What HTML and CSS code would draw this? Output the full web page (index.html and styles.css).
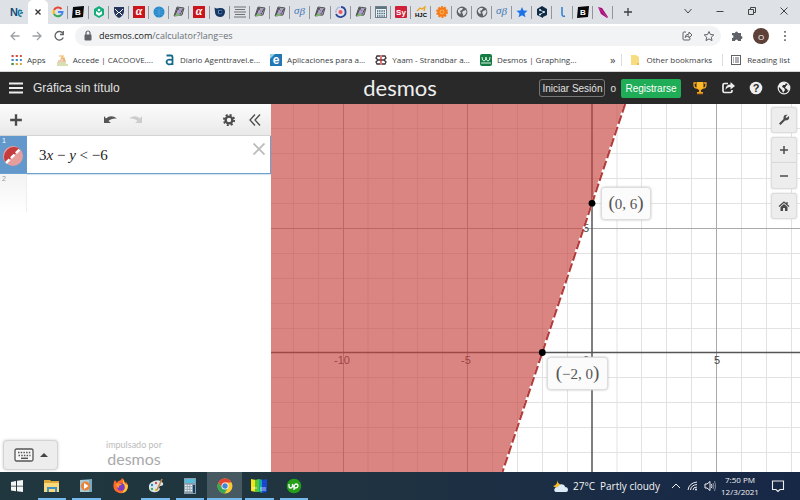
FILE: index.html
```html
<!DOCTYPE html>
<html lang="es">
<head>
<meta charset="utf-8">
<title>Gráfica sin título</title>
<link rel="stylesheet" href="styles.css">
</head>
<body>
<svg class="sprite" aria-hidden="true">
  <symbol id="geo" viewBox="0 0 12 12"><path d="M4 1 11 2 9 9 1 10Z" fill="#a7a2b8" stroke="#555"/><path d="m2 9 3-7 2 6 3-5" fill="none" stroke="#333" stroke-width=".8"/><path d="m5 3 3 4-3 1Z" fill="#b49ae0"/><path d="m1 10 4-3 2 3Z" fill="#7ab66b"/></symbol>
  <symbol id="globe" viewBox="0 0 12 12"><circle cx="6" cy="6" r="5.400" fill="#5f6368"/><path d="M2 4 4 2l3 0-1 2-2 1 1 2-1 1-2-2Zm5 1 3-1 .6 2-1.600 3-2 1 0-2-1-1Z" fill="#dee1e6"/></symbol>
</svg>

<header class="browser">
  <nav class="tabs" aria-label="Pestañas">
    <a class="pinned" href="#"><svg class="wide-icon" viewBox="0 0 14 12"><text x="0" y="10" class="nc" fill="#174a79">N</text><path d="M12 5Q8 3 8.500 7t3 3M10 7.500l3-1" fill="none" stroke="#187aa0" stroke-width="1.600"/></svg></a>
    <div class="tab-list">
      <a class="tab active" href="#"><svg viewBox="0 0 12 12"><path d="m3.500 3.500 5 5m0-5-5 5" stroke="#333" stroke-width="1.300"/></svg></a>
      <a class="tab" href="#"><svg viewBox="0 0 12 12" fill="none" stroke-width="2"><path d="M9.500 3A4.500 4.500 0 0 0 2 4" stroke="#ea4335"/><path d="M2 4a5 5 0 0 0 0 4" stroke="#fbbc05"/><path d="M2 8a4.500 4.500 0 0 0 7 1" stroke="#34a853"/><path d="M9 9.300Q10.500 8 10.500 6H6" stroke="#4285f4"/></svg></a>
      <a class="tab" href="#"><svg viewBox="0 0 12 12"><path d="m1 1 11-1-1 11-11 1Z" fill="#090909"/><text x="6" y="9" text-anchor="middle" class="bold-icon" fill="#fff">B</text></svg></a>
      <a class="tab" href="#"><svg viewBox="0 0 12 12"><path d="m6 0 5 3v6l-5 3-5-3V3Z" fill="#16ad79"/><path d="m3 5 3 2 3-2v3L6 10 3 8Z" fill="#fff"/><circle cx="6" cy="4" r="1.300" fill="#fff"/></svg></a>
      <a class="tab" href="#"><svg viewBox="0 0 12 12"><path d="M1 1h10v5q-1 4-5 6-4-2-5-6Z" fill="#26365f"/><path d="m2 3 4 4 4-4M3 9l3-3 3 3" stroke="#fff" fill="none"/></svg></a>
      <a class="tab" href="#"><svg viewBox="0 0 12 12"><rect width="12" height="12" fill="#c9151b"/><text x="6" y="9" text-anchor="middle" class="serif-icon" fill="#fff">α</text></svg></a>
      <a class="tab" href="#"><svg viewBox="0 0 12 12"><circle cx="6" cy="6" r="5.500" fill="#2786c9"/><path d="M6 1v10M1 6h10M2 3q4 3 8 0M2 9q4-3 8 0" stroke="#55a8df" fill="none" stroke-width=".7"/></svg></a>
      <a class="tab" href="#"><svg><use href="#geo"/></svg></a>
      <a class="tab" href="#"><svg viewBox="0 0 12 12"><rect width="12" height="12" fill="#c9151b"/><text x="6" y="9" text-anchor="middle" class="serif-icon" fill="#fff">α</text></svg></a>
      <a class="tab" href="#"><svg viewBox="0 0 12 12"><path d="M.5 1.500q2 1.500 5 .5 6-.5 5.500 4.500Q10 11 6 11 1 10.500 1 6Z" fill="#173662"/><circle cx="6" cy="6" r="2.200" fill="#5f9fd8"/><circle cx="6.300" cy="6" r="1.500" fill="#0b1d42"/></svg></a>
      <a class="tab" href="#"><svg viewBox="0 0 12 12"><path d="M0 1h12M1 3.500h10M0 6h12M1 8.500h10M0 11h12" stroke="#707070"/></svg></a>
      <a class="tab" href="#"><svg><use href="#geo"/></svg></a>
      <a class="tab" href="#"><svg><use href="#geo"/></svg></a>
      <a class="tab" href="#"><svg viewBox="0 0 12 12"><text x="0" y="8" class="sigma">σ<tspan dy="1">β</tspan></text></svg></a>
      <a class="tab" href="#"><svg><use href="#geo"/></svg></a>
      <a class="tab" href="#"><svg viewBox="0 0 12 12"><path d="M6 1a5 5 0 1 1-5 7" fill="none" stroke="#2b4599" stroke-width="1.800"/><path d="M5 1a5 5 0 0 0-4 6" fill="none" stroke="#b9badb" stroke-width="1.500"/><circle cx="5.500" cy="6" r="2" fill="#ee5265"/></svg></a>
      <a class="tab" href="#"><svg><use href="#geo"/></svg></a>
      <a class="tab" href="#"><svg viewBox="0 0 12 12"><rect x=".5" y=".5" width="11" height="11" fill="#eef2f4" stroke="#72808a"/><path d="M1 2h10" stroke="#5b7484" stroke-width="2"/><path d="M2 5h8M2 7.500h8M2 10h8" stroke="#345c78" stroke-width="1.400" stroke-dasharray="1.300 .9"/></svg></a>
      <a class="tab" href="#"><svg viewBox="0 0 12 12"><rect width="12" height="12" rx="1" fill="#cf2139"/><text x="6" y="9" text-anchor="middle" class="bold-icon" fill="#fff">Sy</text></svg></a>
      <a class="tab" href="#"><svg viewBox="0 0 12 12"><path d="m2 5 3-3 2 1 3-2-1 4" fill="none" stroke="#e9a51d" stroke-width="1.300"/><text x="6" y="11" text-anchor="middle" class="hjc">HJC</text></svg></a>
      <a class="tab" href="#"><svg viewBox="0 0 12 12"><circle cx="6" cy="6" r="4.800" fill="#f47b16"/><circle cx="6" cy="6" r="5.100" fill="none" stroke="#f47b16" stroke-width="1.600" stroke-dasharray="2 1.200"/><circle cx="6" cy="6" r="2" fill="none" stroke="#ffc17b" stroke-width=".8"/></svg></a>
      <a class="tab" href="#"><svg><use href="#globe"/></svg></a>
      <a class="tab" href="#"><svg><use href="#globe"/></svg></a>
      <a class="tab" href="#"><svg viewBox="0 0 12 12"><text x="0" y="8" class="sigma">σ<tspan dy="1">β</tspan></text></svg></a>
      <a class="tab" href="#"><svg viewBox="0 0 12 12"><path d="m6 1 1.500 3.500 4 .3-3 2.600 1 3.900L6 9.200l-3.500 2.100 1-3.900-3-2.600 4-.3Z" fill="#1a73e8"/></svg></a>
      <a class="tab" href="#"><svg viewBox="0 0 12 12"><path d="m6 0 5 3v6L7 11v1L1 9V3Z" fill="#0f2b46"/><path d="m4 4 4 2-4 2.500" fill="none" stroke="#d5e8f7" stroke-width=".8"/><circle cx="4" cy="4" r=".9" fill="#fff"/><circle cx="8" cy="6" r=".9" fill="#fff"/><circle cx="4" cy="8.500" r=".9" fill="#fff"/></svg></a>
      <a class="tab" href="#"><svg viewBox="0 0 12 12"><path d="M5 1v7q0 3 3 2" fill="none" stroke="#2b7ed2" stroke-width="1.500"/></svg></a>
      <a class="tab" href="#"><svg viewBox="0 0 12 12"><path d="m1 1 11-1-1 11-11 1Z" fill="#090909"/><text x="6" y="9" text-anchor="middle" class="bold-icon" fill="#fff">B</text></svg></a>
      <a class="tab" href="#"><svg viewBox="0 0 12 12"><path d="m1 1 4 1 6 9-1 1-6-4Z" fill="#a30c77"/><path d="m1 1 9 10" stroke="#e062b1" stroke-width=".6"/></svg></a>
    </div>
    <button class="new-tab" aria-label="Nueva pestaña"><svg viewBox="0 0 12 12"><path d="M6 2v8M2 6h8" stroke="#3c4043" stroke-width="1.300"/></svg></button>
    <div class="window-controls">
      <button aria-label="Buscar pestañas"><svg viewBox="0 0 12 12"><path d="m2.500 4 3.500 4 3.500-4"/></svg></button>
      <button aria-label="Minimizar"><svg viewBox="0 0 12 12"><path d="M2.500 6.500h7"/></svg></button>
      <button aria-label="Restaurar"><svg viewBox="0 0 12 12"><path d="M2.500 4.500h5v5h-5Zm2 0v-2h5v5h-2"/></svg></button>
      <button aria-label="Cerrar"><svg viewBox="0 0 12 12"><path d="m2.500 2.500 7 7m0-7-7 7"/></svg></button>
    </div>
  </nav>
  <div class="address-row">
    <button class="nav-button faded" aria-label="Atrás"><svg viewBox="0 0 12 12"><path d="M10.500 6H2m4-4L2 6l4 4"/></svg></button>
    <button class="nav-button faded" aria-label="Adelante"><svg viewBox="0 0 12 12"><path d="M1.500 6h8.500M6 2l4 4-4 4"/></svg></button>
    <button class="nav-button" aria-label="Recargar"><svg viewBox="0 0 12 12"><path d="M10 3.500A4.300 4.300 0 1 0 10.300 7.500M10.300 1v3.500H7"/></svg></button>
    <div class="address">
      <svg class="lock" viewBox="0 0 10 12"><rect x="1.500" y="4.500" width="7" height="6" rx="1" fill="#5f6368"/><path d="M3 5V3a2 2 0 0 1 4 0v2" fill="none" stroke="#5f6368" stroke-width="1.200"/></svg>
      <p class="url">desmos.com<span>/calculator?lang=es</span></p>
      <button class="nav-button thin" aria-label="Compartir"><svg viewBox="0 0 12 12"><path d="M5 2H3Q2 2 2 3v6q0 1 1 1h5q1 0 1-1V8M4 7.500Q4.500 4 8 4V2l3 3-3 3V6Q5.500 6 4 7.500Z"/></svg></button>
      <button class="nav-button thin" aria-label="Marcador"><svg viewBox="0 0 12 12"><path d="m6 1.500 1.400 3 3.400.4-2.500 2.300.7 3.400L6 8.900l-3 1.700.7-3.400-2.500-2.300 3.400-.4Z"/></svg></button>
    </div>
    <button class="nav-button" aria-label="Extensiones"><svg viewBox="0 0 12 12"><path class="solid" d="M1 3h3a1.500 1.500 0 1 1 3 0h3v3a1.500 1.500 0 1 1 0 3v2H7a1.500 1.500 0 1 0-3 0H1V8a1.500 1.500 0 1 0 0-3Z"/></svg></button>
    <button class="avatar">O</button>
    <button class="nav-button" aria-label="Menú"><svg viewBox="0 0 12 12"><path class="solid" d="M5.200 1h1.600v1.800H5.200Zm0 4.100h1.600v1.800H5.200Zm0 4.100h1.600V11H5.200Z"/></svg></button>
  </div>
  <nav class="bookmarks" aria-label="Marcadores">
    <a href="#"><svg viewBox="0 0 12 12" fill="none" stroke-width="2.200" stroke-dasharray="2.200 2"><path d="M1.500 2h10.300" stroke="#d94b3c"/><path d="M1.500 6h10.300" stroke="#4285c4"/><path d="M1.500 10h10.300" stroke="#dda536"/><path d="M1.500 10h2.200" stroke="#359c57"/></svg>Apps</a>
    <a href="#"><svg viewBox="0 0 12 12" fill="none" stroke-width="1.200"><path d="M3 2h4l-2 3h4" stroke="#efb261"/><path d="M2 7h7l-2-3" stroke="#e18b7c"/><path d="M1 9h9M1 11h11" stroke="#b6bf69"/><path d="M8 3v5" stroke="#e5c965"/></svg>Accede | CACOOVE....</a>
    <a href="#"><svg viewBox="0 0 12 12"><path d="M3.500 1.500h4.500q1.500 0 1.500 2v7.500M9.500 6Q4 4.500 3.500 8q1 4 6 1.500" fill="none" stroke="#126a88" stroke-width="1.800"/></svg>Diario Agenttravel.e...</a>
    <a href="#"><svg viewBox="0 0 12 12"><rect width="12" height="12" fill="#2278b5"/><path d="M0 0h5L0 5Z" fill="#8fd0e6"/><text x="6" y="10" text-anchor="middle" class="e-icon" fill="#fff">e</text></svg>Aplicaciones para a...</a>
    <a href="#"><svg viewBox="0 0 12 12" fill="none" stroke="#3b3434" stroke-width="1.300"><path d="M5 2H2l-1 2 2 2-2 2 1 2h3M7 2h3l1 2-2 2 2 2-1 2H7M3 6h6"/><path d="M6 1v10" stroke="#d32d38"/></svg>Yaam - Strandbar a...</a>
    <a href="#"><svg viewBox="0 0 12 12"><rect width="12" height="12" rx="2" fill="#167b42"/><path d="M2 3q0 4 2 4t2-4q0 4 2 4t2-4M1 9h10" fill="none" stroke="#d7f3df"/></svg>Desmos | Graphing...</a>
    <button class="more" aria-label="Más marcadores">»</button>
    <a class="divided" href="#"><svg viewBox="0 0 12 12"><path d="M2 1h5l3 2v8H2Z" fill="#f8dc81"/><path d="M8 9h2v2H8Z" fill="#e6bd55"/></svg>Other bookmarks</a>
    <a class="divided" href="#"><svg viewBox="0 0 12 12" fill="none" stroke="#5f6368"><rect x="1.500" y="1.500" width="9" height="9"/><path d="M3 4h1m1 0h4M3 6h1m1 0h4M3 8h1m1 0h4"/></svg>Reading list</a>
  </nav>
</header>

<header class="app-header">
  <div class="header-side">
    <button class="icon-button" aria-label="Menú"><svg viewBox="0 0 14 12"><path d="M0 1.500h14M0 6h14M0 10.500h14" stroke="#eee" stroke-width="1.800"/></svg></button>
    <h1>Gráfica sin título</h1>
  </div>
  <a class="brand" href="#">desmos</a>
  <div class="header-side account">
    <button class="login">Iniciar Sesión</button>
    <span>o</span>
    <button class="register">Registrarse</button>
    <div class="header-icons">
      <button class="icon-button" aria-label="Ejemplos"><svg viewBox="0 0 14 14"><path d="M3 2H1v2q0 3 3 3M11 2h2v2q0 3-3 3" fill="none" stroke="#f6a51d" stroke-width="1.300"/><path d="M3.500 1h7v4q0 4-3.500 4T3.500 5Z" fill="#fdb927"/><path d="M6 8h2v3h2v2H4v-2h2Z" fill="#f6a51d"/><path d="M4 13h6" stroke="#8a4f10"/></svg></button>
      <button class="icon-button" aria-label="Compartir"><svg viewBox="0 0 14 14"><path d="M7 2.500H3.500q-1.500 0-1.500 1.500v6q0 1.500 1.500 1.500h6q1.500 0 1.500-1.500V9" fill="none" stroke="#eee" stroke-width="1.700"/><path d="M4.500 9q0-5.500 5-5.500V1L14 5 9.500 8.500V6Q6 6 4.500 9Z" fill="#eee"/></svg></button>
      <button class="icon-button" aria-label="Ayuda"><svg viewBox="0 0 14 14"><circle cx="7" cy="7" r="6.300" fill="#eee"/><text x="7" y="11" text-anchor="middle" class="question">?</text></svg></button>
      <button class="icon-button" aria-label="Idioma"><svg viewBox="0 0 14 14"><circle cx="7" cy="7" r="5.800" fill="#292929" stroke="#eee" stroke-width="1.200"/><path d="m2 3 3-2 4 1-1 2-2 0-1 2 2 1 1 2-2 3-1-3-3-3Zm7 2 2-2 2 4-2 3-1-2-2-1Z" fill="#eee"/></svg></button>
    </div>
  </div>
</header>

<main class="calculator">
  <section class="panel" aria-label="Expresiones">
    <div class="panel-toolbar">
      <button class="tool add" aria-label="Agregar"><svg viewBox="0 0 12 12"><path d="M6 1v10M1 6h10" stroke="#4b4b4b" stroke-width="2"/></svg></button>
      <button class="tool" aria-label="Deshacer"><svg viewBox="0 0 14 12"><path d="M1 2v7h7L5.500 7Q8 4 14 4.500 8 0 3 4.500Z" fill="#555"/></svg></button>
      <button class="tool" aria-label="Rehacer"><svg viewBox="0 0 14 12"><path d="M13 2v7H6l2.500-2Q6 4 0 4.500 6 0 11 4.500Z" fill="#ccc"/></svg></button>
      <button class="tool settings" aria-label="Opciones"><svg viewBox="0 0 14 14"><circle cx="7" cy="7" r="3.400" fill="none" stroke="#4b4b4b" stroke-width="2.400"/><circle cx="7" cy="7" r="5.200" fill="none" stroke="#4b4b4b" stroke-width="1.800" stroke-dasharray="2.100 1.984"/></svg></button>
      <button class="tool" aria-label="Ocultar"><svg viewBox="0 0 14 14"><path d="M7 1.500 2 7l5 5.500M12 1.500 7 7l5 5.500" fill="none" stroke="#4b4b4b" stroke-width="1.300"/></svg></button>
    </div>
    <ol class="expressions">
      <li class="expression selected">
        <div class="gutter"><span class="index">1</span><button class="color" aria-label="Color"><svg viewBox="0 0 20 20"><circle cx="10" cy="10" r="10" fill="#e79d9c"/><path d="M3 17A10 10 0 0 1 17 3Z" fill="#c43c3d"/><path d="M3 17 17 3" stroke="#fff" stroke-width="2.500" stroke-dasharray="5 2"/></svg></button></div>
        <p class="math">3<i>x</i> − <i>y</i> &lt; −6</p>
        <button class="remove" aria-label="Eliminar"><svg viewBox="0 0 12 12"><path d="m.5.500 11 11m0-11-11 11" stroke="#bbb" stroke-width="1.800"/></svg></button>
      </li>
      <li class="expression"><div class="gutter"><span class="index">2</span></div></li>
    </ol>
    <footer class="panel-footer">
      <button class="keyboard" aria-label="Teclado"><svg class="keys" viewBox="0 0 20 14"><rect x="1" y="1" width="18" height="12" rx="1.500" fill="#f7f7f7" stroke="#555" stroke-width="1.300"/><path d="M4 4.500h13M4.500 7.500h12" stroke="#555" stroke-width="1.500" stroke-dasharray="1.500 1.200"/><path d="M7 10.300h7" stroke="#555" stroke-width="1.500"/></svg><svg class="caret" viewBox="0 0 8 6"><path d="m0 5 4-4 4 4Z" fill="#444"/></svg></button>
      <p class="powered">impulsado por <span>desmos</span></p>
    </footer>
  </section>
  <section class="graph" aria-label="Gráfica">
    <svg class="plot" viewBox="271 104 529 368" preserveAspectRatio="xMinYMin slice">
      <path class="minor" d="M293.500 104v368M318.500 104v368M368 104v368M393 104v368M417.500 104v368M442.500 104v368M492.500 104v368M517.500 104v368M542.500 104v368M567.500 104v368M617 104v368M641.500 104v368M666.500 104v368M691.500 104v368M741.500 104v368M766.500 104v368M791.500 104v368M271 128.500h529M271 153.500h529M271 178.500h529M271 203.500h529M271 253.500h529M271 278.500h529M271 303.500h529M271 328.500h529M271 377.500h529M271 402.500h529M271 427.500h529M271 452.500h529"/>
      <path class="major" d="M343.500 104v368M467.500 104v368M716.500 104v368M271 228.500h529"/>
      <path class="axis" d="M592 104v368M271 352.500h529"/>
      <g class="labels"><text x="342" y="364">-10</text><text x="466" y="364">-5</text><text x="586" y="364">0</text><text x="717" y="364">5</text><text x="586" y="232">5</text></g>
      <path class="region" d="M271 104h354.100L502.400 472H271Z"/>
      <path d="M625.100 104 502.400 472" stroke="#fff" stroke-width="2.200"/>
      <path class="boundary" d="M625.100 104 502.400 472"/>
      <circle cx="592" cy="203.300" r="3.400"/><circle cx="542.300" cy="352.500" r="3.400"/>
      <g class="point"><rect x="601.500" y="187.500" width="49" height="32" rx="3"/><text x="626" y="209"><tspan class="paren">(</tspan>0, 6<tspan class="paren">)</tspan></text></g>
      <g class="point"><rect x="547.500" y="357.500" width="60" height="32" rx="3"/><text x="577.500" y="379"><tspan class="paren">(</tspan>−2, 0<tspan class="paren">)</tspan></text></g>
    </svg>
    <div class="graph-tools">
      <button aria-label="Configurar"><svg viewBox="0 0 12 12"><path d="M11 2 8.500 4 7.500 3 9.500.8Q5 .2 5.500 5L1 9.500 2.500 11 7 6.500Q12 6.500 11 2Z" fill="#4b4b4b"/></svg></button>
      <div class="zoom"><button aria-label="Acercar"><svg viewBox="0 0 12 12"><path d="M6 2v8M2 6h8" stroke="#4b4b4b" stroke-width="1.500"/></svg></button><button aria-label="Alejar"><svg viewBox="0 0 12 12"><path d="M2 6h8" stroke="#4b4b4b" stroke-width="1.500"/></svg></button></div>
      <button aria-label="Inicio"><svg viewBox="0 0 12 12"><path d="M1 6.500 6 2l5 4.500M9 2v2" fill="none" stroke="#4b4b4b" stroke-width="1.300"/><path d="m2.500 7 3.500-3 3.500 3v4H7V8H5v3H2.500Z" fill="#4b4b4b"/></svg></button>
    </div>
  </section>
</main>

<footer class="taskbar">
  <nav class="tasks" aria-label="Aplicaciones">
    <button aria-label="Inicio"><svg viewBox="0 0 16 16"><path d="m2 4 5-1v4.700H2Zm6-1.200L14 2v5.700H8ZM2 8.500h5v4.700l-5-.8Zm6 0h6V14l-6-.8Z" fill="#f4f4f4"/></svg></button>
    <button class="open" aria-label="Archivos"><svg viewBox="0 0 16 16"><path d="M0 2h6l1 1h8v11H0Z" fill="#dba93d"/><path d="M0 5h15v9H0Z" fill="#f9d979"/><path d="M3 14V9h10v5h-2v-3H5v3Z" fill="#3e91c8"/></svg></button>
    <button class="open" aria-label="Multimedia"><svg viewBox="0 0 16 16"><path d="m2 2 12-1v13H2Z" fill="#78a9bd"/><path d="M2 2h9v12H2Z" fill="#a8c8d2"/><circle cx="7.500" cy="8" r="4.500" fill="#e98339"/><path d="m6 5 4.500 3L6 11Z" fill="#fff"/></svg></button>
    <button aria-label="Firefox"><svg viewBox="0 0 16 16"><path d="M1 4q-2 7 3 10t9-1q4-5 0-9l-1 1q0-3-3-5-1 3-4 3L4 5 2 2Z" fill="#ff6a2b"/><path d="M10 1q1 3 2 5l3 1q0 7-6 8 4-4 1-9Z" fill="#ffc638"/><circle cx="8" cy="9" r="3.800" fill="#7a3aca"/><path d="M3 6q4-2 6 1-4 0-3 3-3-1-3-4Z" fill="#ff9730"/></svg></button>
    <button class="open" aria-label="Paint"><svg viewBox="0 0 16 16"><path d="M1 10Q0 5 6 3t9 2q1 3-3 3-2 1 0 3-2 4-7 3-4-1-4-4Z" fill="#dae8ed"/><circle cx="4" cy="7" r="1.200" fill="#2f83c2"/><circle cx="8" cy="5" r="1.200" fill="#d84b40"/><circle cx="4" cy="11" r="1.200" fill="#45a85a"/><circle cx="8" cy="12" r="1.200" fill="#e5b936"/><path d="m9 12 5-11" stroke="#bf8650" stroke-width="1.600"/></svg></button>
    <button class="open" aria-label="Calculadora"><svg viewBox="0 0 16 16"><path d="M2 0h12v16H2Z" fill="#8a9ca9"/><path d="M3 1h10v4H3Z" fill="#56bddb"/><path d="M3 7.500h7M3 10h7M3 12.500h7" stroke="#eef5f8" stroke-width="1.600" stroke-dasharray="1.800 .8"/><path d="M11 7h2v8h-2Z" fill="#183f64"/></svg></button>
    <button class="open current" aria-label="Chrome"><svg viewBox="0 0 16 16"><circle cx="8" cy="8" r="7.500" fill="#f9ca38"/><path d="M1.500 4.200A7.500 7.500 0 0 1 14.500 4.500H8L5 9.800Z" fill="#e54435"/><path d="M1.500 4.200A7.500 7.500 0 0 0 7.500 15.500L11 9.800H5Z" fill="#35a853"/><circle cx="8" cy="8" r="3.500" fill="#fff"/><circle cx="8" cy="8" r="2.700" fill="#4285d5"/></svg></button>
    <button class="open" aria-label="Mapa"><svg viewBox="0 0 16 16"><path d="m0 1 5 1v12l-5-1Z" fill="#f2e51c"/><path d="m4 2 4-1v13H4Z" fill="#55c536"/><path d="m8 1 4 1v13l-4-1Z" fill="#15a9a4"/><path d="m11 2 5-1v13l-5 1Z" fill="#1746d1"/><path d="M1 10h5m3 0h6M9 12h6" stroke="#fff" stroke-width=".7"/></svg></button>
    <button class="open" aria-label="Upwork"><svg viewBox="0 0 16 16"><circle cx="8" cy="8" r="7.300" fill="#23a018"/><path d="M3 6v2q0 2 1.700 2T6.500 8V6q1 4 3 4t2.500-2q0-2-2-2T8 12" fill="none" stroke="#fff" stroke-width="1.300"/></svg></button>
  </nav>
  <button class="weather"><svg viewBox="0 0 16 16"><path d="M5 1q0 5 5 6-4 5-9 1 5-1 4-7Z" fill="#f7bd2e"/><path d="M4 14q-3-1-1-4 1-1 3-1 2-4 6-2 1 1 1 2 3 0 3 3 0 2-2 2Z" fill="#dcebf7"/></svg><span>27°C</span><span>Partly cloudy</span></button>
  <div class="tray">
    <svg viewBox="0 0 12 12"><path d="m2 8 4-4 4 4"/></svg>
    <svg viewBox="0 0 12 12"><path d="M1 10Q2 3 10 2M3.500 10Q4 5 10 4.500M6 10q0-3 4-3"/><circle cx="9" cy="9.500" r="1" fill="#eee"/></svg>
    <svg viewBox="0 0 12 12"><path d="M1 4h2l3-2.500v9L3 8H1ZM7.500 4q1 2 0 4"/><path d="M9 3q2 3 0 6m1.500-8q2.500 5 0 10" opacity=".5"/></svg>
  </div>
  <time class="clock"><span>7:50 PM</span><span>12/3/2021</span></time>
  <button class="notify" aria-label="Notificaciones"><svg viewBox="0 0 14 14"><path d="M1.500 2h11v8.500H9L7 12.500 5 10.500H1.500Z" fill="none" stroke="#eee" stroke-width="1.100"/></svg></button>
</footer>
</body>
</html>
```
FILE: styles.css
```css
* { box-sizing: border-box; }
body { margin: 0; height: 100vh; display: flex; flex-direction: column; overflow: hidden; font-family: "Liberation Sans", sans-serif; font-size: 11px; color: #333; background: #fff; }
button { border: 0; padding: 0; margin: 0; background: none; font: inherit; color: inherit; display: flex; align-items: center; justify-content: center; }
a { color: inherit; text-decoration: none; }
p, h1, ol { margin: 0; padding: 0; font-weight: normal; }
svg { display: block; flex: none; width: 12px; height: 12px; }
.sprite { position: absolute; width: 0; height: 0; }
.tab svg { overflow: visible; }
.serif-icon { font: italic bold 12px "Liberation Serif", serif; }
.sigma { font: italic 11px "Liberation Serif", serif; fill: #3f78b5; }
.bold-icon { font: bold 8px "Liberation Sans", sans-serif; }
.hjc { font: bold 6px "Liberation Sans", sans-serif; }
.nc { font: bold 11px "Liberation Sans", sans-serif; }
.e-icon { font: bold 12px "Liberation Sans", sans-serif; }
.question { font: bold 11px "Liberation Sans", sans-serif; fill: #292929; }

.browser { font-family: "Open Sans", sans-serif; flex: none; }
.tabs { height: 24px; display: flex; background: #dee1e6; }
.pinned { width: 28px; display: flex; align-items: center; justify-content: flex-end; padding-right: 4px; }
.wide-icon { width: 14px; }
.tab-list { flex: 1; display: flex; }
.tab { flex: 1; display: flex; align-items: center; justify-content: center; position: relative; }
.tab + .tab::after { content: ""; position: absolute; right: 0; top: 6px; height: 13px; width: 1px; background: #92969c; }
.tab.active { background: #fff; border-radius: 5px 5px 0 0; }
.new-tab { width: 30px; }
.window-controls { width: 157px; display: flex; padding-left: 1px; padding-bottom: 2px; align-items: center; justify-content: flex-end; }
.window-controls button { width: 32px; height: 20px; }
.window-controls path { fill: none; stroke: #444; }
.address-row { height: 24px; display: flex; align-items: center; padding: 0 9px; gap: 10px; }
.nav-button path { fill: none; stroke: #5f6368; stroke-width: 1.3px; }
.nav-button.thin path { stroke-width: 1px; }
.nav-button path.solid { fill: #5f6368; stroke: none; }
.faded { opacity: .6; }
.address { flex: 1; height: 20px; border-radius: 10px; background: #f1f3f4; display: flex; align-items: center; gap: 10px; padding: 0 6px; }
.lock { width: 10px; margin-left: 2px; }
.url { flex: 1; font-size: 9px; line-height: 16px; color: #222; margin-left: -4px; }
.url span { color: #6b6f74; }
.avatar { width: 16px; height: 16px; border-radius: 50%; background: #5d4037; color: #fff; font-size: 8px; }
.bookmarks { height: 24px; display: flex; align-items: center; border-bottom: 1px solid #d5d5d5; padding: 0 10px; font-size: 8px; color: #3c4043; white-space: nowrap; }
.bookmarks a { display: flex; align-items: center; gap: 5px; }
.bookmarks a + a { margin-left: 10px; }
.more { margin-left: auto; font-size: 11px; }
.bookmarks .more + .divided { margin-left: 6px; }
.bookmarks .divided { padding-left: 7px; border-left: 1px solid #ddd; }

.app-header { flex: none; height: 32px; background: #292929; display: grid; grid-template-columns: 1fr auto 1fr; align-items: center; padding: 0 9px; color: #e2e2e2; }
.header-side { display: flex; align-items: center; gap: 10px; }
.icon-button svg { width: 14px; height: 14px; }
h1 { font-size: 12px; }
.brand { font-family: Lato, sans-serif; font-size: 22px; line-height: 28px; color: #eee; }
.account { justify-content: flex-end; gap: 5px; font-size: 10px; white-space: nowrap; }
.login { height: 18px; width: 66px; border: 1px solid #777; border-radius: 3px; }
.register { height: 19px; width: 60px; border-radius: 2px; background: #1fad58; color: #fff; }
.header-icons { display: flex; gap: 14px; margin-left: 7px; }

.calculator { flex: 1; min-height: 0; display: flex; }
.panel { width: 271px; flex: none; display: flex; flex-direction: column; }
.panel-toolbar { height: 32px; display: flex; align-items: center; padding: 0 9px; gap: 12px; background: linear-gradient(#fcfcfc, #e9e9e9); border-bottom: 1px solid #d4d4d4; }
.tool svg { width: 14px; height: 14px; }
.add { margin-right: 68px; }
.settings { margin-left: auto; }
.expressions { list-style: none; flex: 1; }
.expression { height: 38px; display: flex; position: relative; }
.gutter { width: 27px; background: linear-gradient(#f3f3f3, #fff); border-right: 1px solid #eee; color: #999; }
.index { display: block; font-size: 7px; line-height: 8px; padding: 1px 2px; }
.selected { border-bottom: 1px solid #6ba1cf; border-right: 1px solid #6ba1cf; box-shadow: 0 1px 1px #d9e5ed; }
.selected .gutter { background: #6298cc; color: #fff; border: 0; }
.color { width: 20px; height: 20px; margin: 0 auto 0 3px; }
.color svg { width: 20px; height: 20px; }
.math { flex: 1; font: 15px/38px "Liberation Serif", serif; padding-left: 12px; color: #222; }
.remove { align-self: flex-start; margin: 7px 5px 0 0; }
.panel-footer { display: flex; align-items: center; gap: 48px; padding: 0 3px 2px; }
.keyboard { width: 55px; height: 30px; gap: 6px; border: 1px solid #d4d4d4; border-radius: 4px; background: #ededed; box-shadow: 0 0 3px #ccc; }
.keys { width: 20px; height: 14px; }
.caret { width: 8px; height: 6px; }
.powered { font-family: Lato, sans-serif; font-size: 9px; line-height: 10px; color: #bbb; text-align: center; margin-bottom: 2px; }
.powered span { display: block; font-size: 16px; line-height: 18px; color: #aaa; }

.graph { flex: 1; position: relative; min-width: 0; }
.plot { width: 100%; height: 100%; }
.minor { stroke: #e2e2e2; }
.major { stroke: #aaa; }
.axis { stroke: #555; stroke-width: 1.5px; }
.labels { font: 11px "Liberation Sans", sans-serif; text-anchor: middle; fill: #444; }
.region { fill: #c74440; fill-opacity: .65; }
.boundary { stroke: #b43c3a; stroke-width: 2.2px; stroke-dasharray: 9 3; }
.point rect { fill: #fff; fill-opacity: .94; stroke: #ddd; filter: drop-shadow(0 0 1px #bbb); }
.point text { font: 15px "Liberation Serif", serif; text-anchor: middle; fill: #555; }
.point .paren { font-size: 19px; }
.graph-tools { position: absolute; right: 3px; top: 3px; display: flex; flex-direction: column; gap: 4px; }
.graph-tools button { width: 26px; height: 26px; background: #ededed; border: 1px solid #ddd; border-radius: 3px; box-shadow: 0 0 2px #ccc; }
.zoom button:first-child { border-radius: 3px 3px 0 0; }
.zoom button:last-child { border-radius: 0 0 3px 3px; border-top: 0; }

.taskbar { flex: none; height: 28px; display: flex; align-items: center; background: linear-gradient(90deg, #20373f, #20353f 35%, #192b46 80%, #172746); color: #f3f3f3; font-family: "Open Sans", sans-serif; white-space: nowrap; }
.tasks { width: 311px; height: 28px; display: flex; }
.tasks button { flex: 1; position: relative; }
.tasks svg { width: 16px; height: 16px; }
.tasks .open::after { content: ""; position: absolute; left: 3px; right: 3px; bottom: 0; height: 2px; background: #76b9ed; }
.tasks .current { background: #475961; }
.tasks .current::after { left: 0; right: 0; }
.weather { margin-left: auto; gap: 5px; font-size: 10px; }
.weather svg { width: 16px; height: 16px; }
.tray { display: flex; gap: 5px; margin: 0 4px 0 10px; }
.tray path { fill: none; stroke: #eee; }
.clock { width: 40px; display: flex; flex-direction: column; text-align: center; font-size: 8px; line-height: 12px; }
.notify { width: 40px; padding-right: 4px; }
.notify svg { width: 14px; height: 14px; }
```
